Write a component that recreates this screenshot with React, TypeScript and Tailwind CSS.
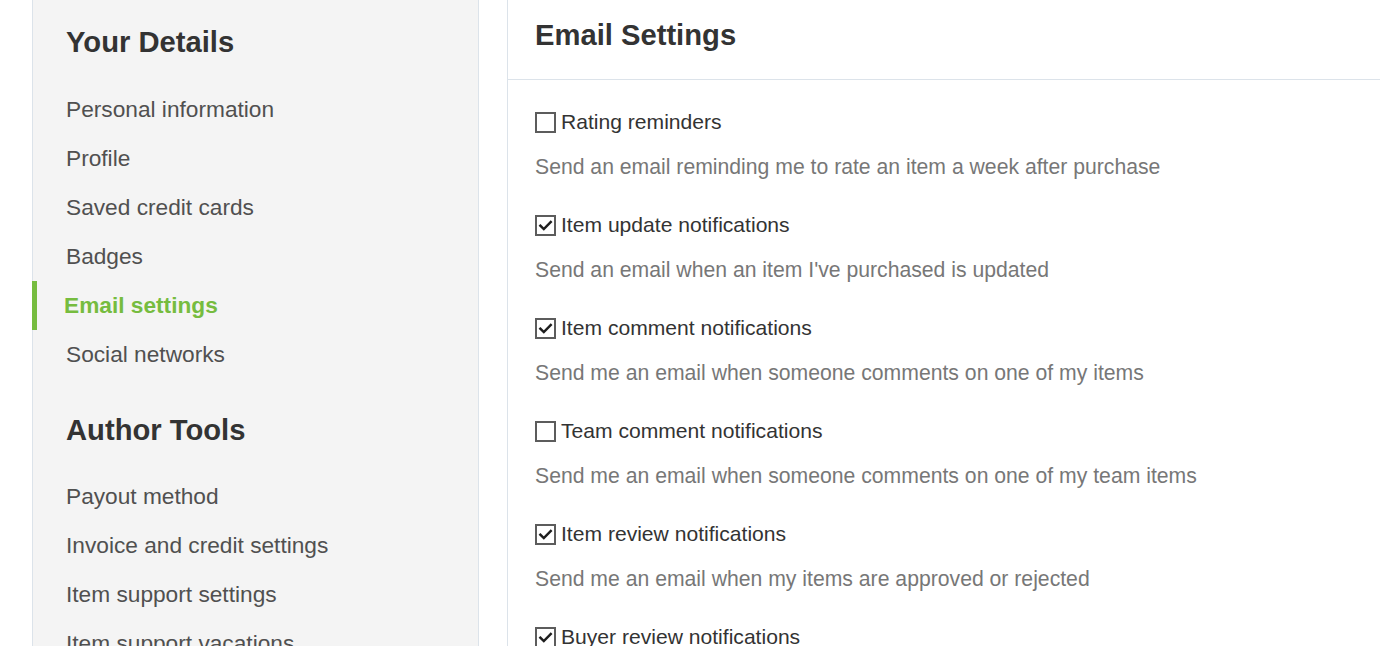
import React from "react";

const yourDetails = [
  { label: "Personal information" },
  { label: "Profile" },
  { label: "Saved credit cards" },
  { label: "Badges" },
  { label: "Email settings", active: true },
  { label: "Social networks" },
];

const authorTools = [
  { label: "Payout method" },
  { label: "Invoice and credit settings" },
  { label: "Item support settings" },
  { label: "Item support vacations" },
];

const settings = [
  {
    label: "Rating reminders",
    desc: "Send an email reminding me to rate an item a week after purchase",
    checked: false,
  },
  {
    label: "Item update notifications",
    desc: "Send an email when an item I've purchased is updated",
    checked: true,
  },
  {
    label: "Item comment notifications",
    desc: "Send me an email when someone comments on one of my items",
    checked: true,
  },
  {
    label: "Team comment notifications",
    desc: "Send me an email when someone comments on one of my team items",
    checked: false,
  },
  {
    label: "Item review notifications",
    desc: "Send me an email when my items are approved or rejected",
    checked: true,
  },
  {
    label: "Buyer review notifications",
    desc: "Send me an email when someone leaves a review with their rating",
    checked: true,
  },
];

type NavItem = { label: string; active?: boolean };

const NavList = ({ items }: { items: NavItem[] }) => (
  <ul>
    {items.map((item) =>
      item.active ? (
        <li
          key={item.label}
          className="h-[49px] flex items-center border-l-[5px] border-[#76bc3f] -ml-px pl-[27px] text-[22.7px] font-bold text-[#76bc3f]"
        >
          {item.label}
        </li>
      ) : (
        <li
          key={item.label}
          className="h-[49px] flex items-center pl-[33px] text-[22.7px] text-[#505050]"
        >
          {item.label}
        </li>
      )
    )}
  </ul>
);

const Checkbox = ({ checked }: { checked: boolean }) => (
  <span className="w-[21px] h-[21px] shrink-0 border-2 border-[#5c5c5c] bg-white flex items-center justify-center">
    {checked && (
      <svg viewBox="0 0 16 16" className="w-[15px] h-[15px]">
        <path
          d="M2.5 8.2 L6.2 11.8 L13.6 4.2"
          fill="none"
          stroke="#1e1e1e"
          strokeWidth="2.6"
          strokeLinecap="square"
        />
      </svg>
    )}
  </span>
);

export default function App() {
  return (
    <div className="flex h-[646px] overflow-hidden bg-white font-['Liberation_Sans',Arial,sans-serif]">
      <div className="w-8 shrink-0" />

      {/* Sidebar */}
      <aside className="w-[447px] shrink-0 bg-[#f4f4f4] border-x border-[#dce3ea]">
        <h2 className="pl-[33px] pt-[25px] h-[59px] text-[29.2px] leading-[34px] font-bold text-[#333]">
          Your Details
        </h2>
        <div className="mt-[26px]">
          <NavList items={yourDetails} />
        </div>
        <h2 className="mt-[34px] pl-[33px] h-[34px] text-[29.2px] leading-[34px] font-bold text-[#333]">
          Author Tools
        </h2>
        <div className="mt-[25px]">
          <NavList items={authorTools} />
        </div>
      </aside>

      <div className="w-[28px] shrink-0" />

      {/* Main */}
      <main className="flex-1 border-l border-[#dce3ea]">
        <div className="h-[80px] border-b border-[#dce3ea] pl-[27px] pt-[18px]">
          <h1 className="text-[29.2px] leading-[34px] font-bold text-[#333]">
            Email Settings
          </h1>
        </div>
        <div className="pl-[27px] pt-[27px]">
          {settings.map((s) => (
            <div key={s.label} className="mb-[28px]">
              <label className="h-[30px] flex items-center gap-[5px] text-[21.1px] text-[#333]">
                <Checkbox checked={s.checked} />
                <span>{s.label}</span>
              </label>
              <p className="mt-[15px] h-[30px] flex items-center text-[21.2px] text-[#777]">
                {s.desc}
              </p>
            </div>
          ))}
        </div>
      </main>
    </div>
  );
}
